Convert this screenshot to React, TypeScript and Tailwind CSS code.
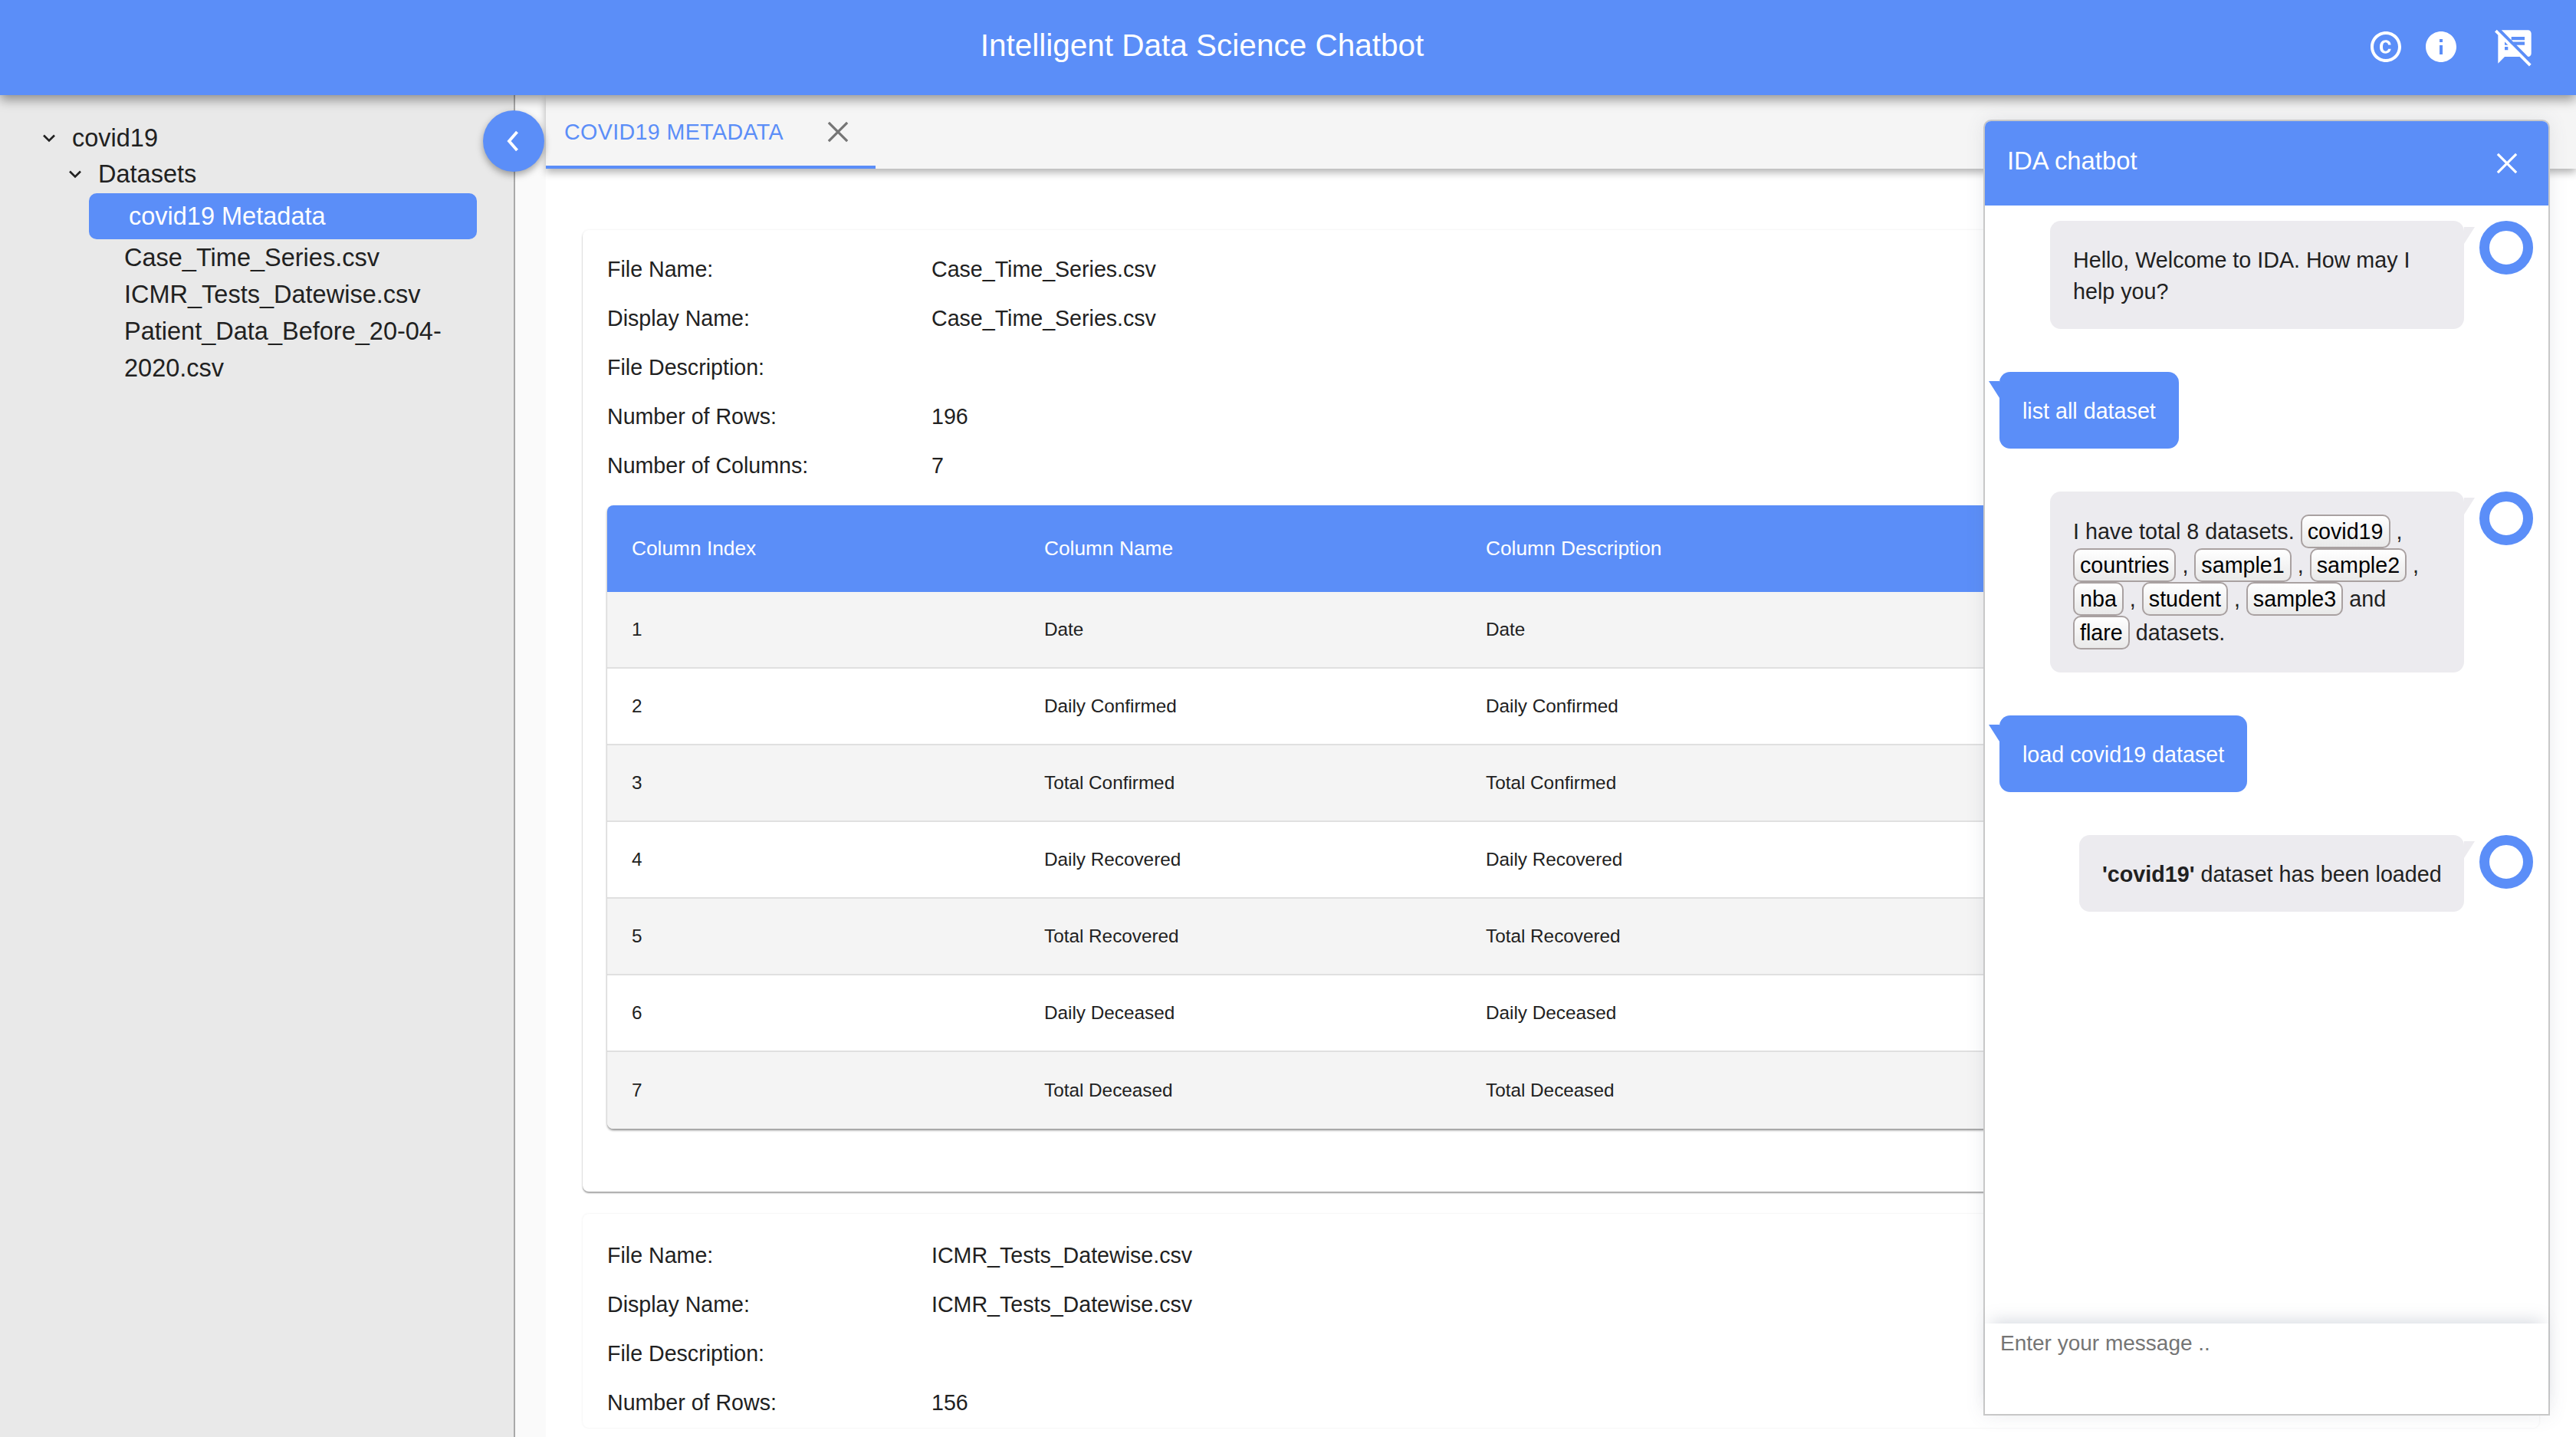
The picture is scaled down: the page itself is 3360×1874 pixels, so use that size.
import React from "react";
import { MdCopyright, MdInfo, MdSpeakerNotesOff } from "react-icons/md";

const Chevron = ({ dir = "down", className = "" }: { dir?: "down" | "left"; className?: string }) => (
  <svg viewBox="0 0 20 20" className={className} fill="none" stroke="currentColor" strokeWidth="2.6">
    {dir === "down" ? <path d="M3 6.5 10 13.5 17 6.5" /> : <path d="M13 2 6 10 13 18" />}
  </svg>
);

const Cross = ({ className = "" }: { className?: string }) => (
  <svg viewBox="0 0 30 30" className={className} fill="none" stroke="currentColor" strokeWidth="3.4">
    <path d="M2 2 28 28M28 2 2 28" />
  </svg>
);

const Meta = ({ label, value }: { label: string; value?: string }) => (
  <div className="flex h-[64.2px] items-center text-[28.6px] text-[#212121]">
    <div className="w-[423px] shrink-0">{label}</div>
    <div>{value}</div>
  </div>
);

const rows = [
  ["1", "Date", "Date"],
  ["2", "Daily Confirmed", "Daily Confirmed"],
  ["3", "Total Confirmed", "Total Confirmed"],
  ["4", "Daily Recovered", "Daily Recovered"],
  ["5", "Total Recovered", "Total Recovered"],
  ["6", "Daily Deceased", "Daily Deceased"],
  ["7", "Total Deceased", "Total Deceased"],
];

const Chip = ({ children }: { children: string }) => (
  <span className="inline-flex h-[44px] items-center rounded-[10px] border-2 border-[#a9a1a1] bg-gradient-to-b from-white to-[#e9e9e9] px-[7px] align-top text-black">
    {children}
  </span>
);

const BotTurn = ({ children, width, mb }: { children: React.ReactNode; width: string; mb: string }) => (
  <div className={`flex justify-end pr-[20px] ${mb}`}>
    <div className={`relative rounded-[14px] bg-[#ecebef] text-[#212121] ${width}`}>
      {children}
      <div className="absolute left-full top-[8px] h-0 w-0 border-r-[14px] border-t-[22px] border-r-transparent border-t-[#ecebef]" />
    </div>
    <div className="ml-[20px] h-[70px] w-[70px] shrink-0 rounded-full border-[13px] border-[#5b8ef8] bg-white" />
  </div>
);

const UserTurn = ({ children, mb }: { children: string; mb: string }) => (
  <div className={`pl-[19px] ${mb}`}>
    <div className="relative inline-block rounded-[14px] bg-[#5b8ef8] px-[30px] pb-[28px] pt-[31px] leading-[41px] text-white">
      {children}
      <div className="absolute right-full top-[12px] h-0 w-0 border-l-[14px] border-t-[22px] border-l-transparent border-t-[#5b8ef8]" />
    </div>
  </div>
);

export default function App() {
  return (
    <div
      className="relative flex h-[1874px] w-[3360px] flex-col overflow-hidden bg-white"
      style={{ fontFamily: '"Liberation Sans", Arial, sans-serif' }}
    >
      <header className="relative z-20 flex h-[124px] shrink-0 items-center bg-[#5b8ef8] pb-[6px] text-white shadow-[0_6px_14px_rgba(0,0,0,0.4)]">
        <div className="w-[3136px] text-center text-[40.5px] leading-none">Intelligent Data Science Chatbot</div>
        <div className="absolute left-[3088px] top-[35px] flex items-center">
          <MdCopyright className="h-[48px] w-[48px]" />
          <MdInfo className="ml-[24px] h-[48px] w-[48px]" />
          <MdSpeakerNotesOff className="ml-[46px] h-[52px] w-[52px]" />
        </div>
      </header>

      <div className="flex min-h-0 flex-1">
        <aside className="w-[672px] shrink-0 border-r-2 border-[#a9a9a9] bg-[#e9e9e9] pt-[32px] text-[32.5px] text-[#212121]">
          <div className="flex h-[48px] items-center pl-[54px]">
            <Chevron className="h-[20px] w-[20px]" />
            <span className="ml-[20px]">covid19</span>
          </div>
          <div className="flex h-[46px] items-center pl-[88px]">
            <Chevron className="h-[20px] w-[20px]" />
            <span className="ml-[20px]">Datasets</span>
          </div>
          <div className="ml-[116px] mt-[2px] flex h-[60px] w-[506px] items-center rounded-[10px] bg-[#5b8ef8] pl-[52px] text-white">
            covid19 Metadata
          </div>
          <div className="ml-[162px] w-[440px] leading-[48px]">
            <div>Case_Time_Series.csv</div>
            <div>ICMR_Tests_Datewise.csv</div>
            <div>Patient_Data_Before_20-04-2020.csv</div>
          </div>
        </aside>

        <main className="min-w-0 flex-1 bg-[#fafafa] pl-[40px]">
          <div className="flex h-full flex-col bg-white">
            <div className="relative z-10 flex h-[96px] shrink-0 bg-[#f5f5f5] shadow-[0_5px_10px_rgba(0,0,0,0.3)]">
              <div className="flex h-full w-[430px] items-center border-b-[4px] border-[#5b8ef8] pl-[24px] pt-[4px]">
                <span className="text-[28.6px] tracking-[0.4px] text-[#5b8ef8]">COVID19 METADATA</span>
                <Cross className="ml-[56px] h-[28px] w-[30px] text-[#757575]" />
              </div>
            </div>
            <div className="flex flex-col gap-[29px] pl-[48px] pr-[48px] pt-[80px]">
              <section className="h-[1254px] rounded-[8px] bg-white px-[32px] pt-[19px] shadow-[0_2px_2px_rgba(0,0,0,0.35),0_0_3px_rgba(0,0,0,0.08)]">
                <Meta label="File Name:" value="Case_Time_Series.csv" />
                <Meta label="Display Name:" value="Case_Time_Series.csv" />
                <Meta label="File Description:" />
                <Meta label="Number of Rows:" value="196" />
                <Meta label="Number of Columns:" value="7" />
                <div className="mt-[19px] overflow-hidden rounded-[8px] text-[24.3px] shadow-[0_2px_3px_rgba(0,0,0,0.45)]">
                  <div className="grid h-[113px] grid-cols-[538px_576px_1fr] items-center bg-[#5b8ef8] pl-[32px] text-[26.3px] text-white">
                    <div>Column Index</div>
                    <div>Column Name</div>
                    <div>Column Description</div>
                  </div>
                  {rows.map((r, i) => (
                    <div
                      key={r[0]}
                      className={`grid h-[100px] grid-cols-[538px_576px_1fr] items-center border-b-2 border-[#e0e0e0] pl-[32px] text-[#212121] last:border-b-0 ${
                        i % 2 === 0 ? "bg-[#f4f4f4]" : "bg-white"
                      }`}
                    >
                      <div>{r[0]}</div>
                      <div>{r[1]}</div>
                      <div>{r[2]}</div>
                    </div>
                  ))}
                </div>
              </section>
              <section className="flex-1 rounded-[8px] bg-white px-[32px] pt-[22px] shadow-[0_0_3px_rgba(0,0,0,0.08)]">
                <Meta label="File Name:" value="ICMR_Tests_Datewise.csv" />
                <Meta label="Display Name:" value="ICMR_Tests_Datewise.csv" />
                <Meta label="File Description:" />
                <Meta label="Number of Rows:" value="156" />
              </section>
            </div>
          </div>
        </main>
      </div>

      {/* collapse toggle */}
      <button className="absolute left-[630px] top-[144px] z-30 flex h-[80px] w-[80px] items-center justify-center rounded-full bg-[#5b8ef8] text-white shadow-[0_4px_10px_rgba(0,0,0,0.35)]">
        <Chevron dir="left" className="h-[30px] w-[30px]" />
      </button>

      {/* chat window */}
      <div className="absolute left-[2587px] top-[156px] z-30 flex h-[1690px] w-[739px] flex-col rounded-t-[10px] border-2 border-[#c8c8c8] bg-white text-[28.7px] shadow-[0_0_24px_rgba(90,100,120,0.12)]">
        <div className="flex h-[110px] shrink-0 items-center justify-between rounded-t-[8px] bg-[#5b8ef8] pb-[6px] pl-[29px] pr-[40px] text-[32.8px] text-white">
          <span>IDA chatbot</span>
          <Cross className="mt-[5px] h-[28px] w-[28px]" />
        </div>
        <div className="min-h-0 flex-1 pt-[20px]">
          <BotTurn width="w-[540px]" mb="mb-[56px]">
            <div className="px-[30px] pb-[28px] pt-[31px] leading-[41px]">Hello, Welcome to IDA. How may I help you?</div>
          </BotTurn>
          <UserTurn mb="mb-[56px]">list all dataset</UserTurn>
          <BotTurn width="w-[540px]" mb="mb-[56px]">
            <div className="px-[30px] pb-[30px] pt-[30px] leading-[44px]">
              I have total 8 datasets. <Chip>covid19</Chip> , <Chip>countries</Chip> , <Chip>sample1</Chip> ,{" "}
              <Chip>sample2</Chip> , <Chip>nba</Chip> , <Chip>student</Chip> , <Chip>sample3</Chip> and{" "}
              <Chip>flare</Chip> datasets.
            </div>
          </BotTurn>
          <UserTurn mb="mb-[56px]">load covid19 dataset</UserTurn>
          <BotTurn width="w-[502px]" mb="mb-0">
            <div className="whitespace-nowrap px-[30px] pb-[28px] pt-[31px] leading-[41px]">
              <b>'covid19'</b> dataset has been loaded
            </div>
          </BotTurn>
        </div>
        <div className="relative h-[118px] shrink-0 bg-white px-[20px] pt-[9px] text-[28px] leading-[34px] text-[#757575] shadow-[0_-12px_20px_-8px_rgba(120,130,150,0.28)]">
          Enter your message ..
        </div>
      </div>
    </div>
  );
}
